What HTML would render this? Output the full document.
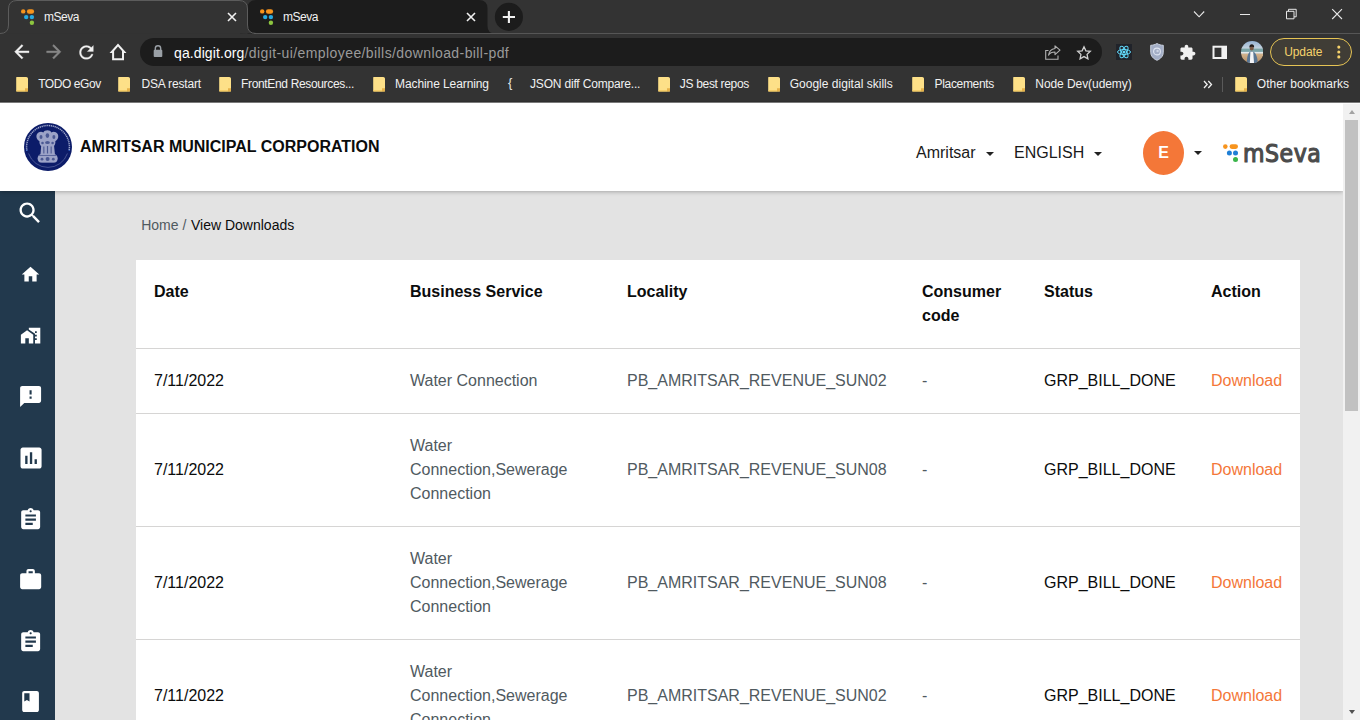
<!DOCTYPE html>
<html lang="en">
<head>
<meta charset="utf-8">
<title>mSeva</title>
<style>
*{box-sizing:border-box;margin:0;padding:0}
html,body{width:1360px;height:720px;overflow:hidden;background:#e3e3e3;font-family:"Liberation Sans",Arial,sans-serif}
.abs{position:absolute}
/* ---------- browser chrome ---------- */
#chrome{position:absolute;left:0;top:0;width:1360px;height:103px;background:#333333;border-bottom:1px solid #7a7a7a;box-shadow:inset 0 -1px 0 #2e2e2e;z-index:10;color:#fff;font-family:"Liberation Sans",sans-serif;font-size:12px}
#chrome svg{position:absolute;display:block}
.tabtxt{position:absolute;top:10px;font-size:12px;line-height:14px;color:#f1f1f1;white-space:nowrap;letter-spacing:-0.45px}
#tabline{position:absolute;left:490px;top:33px;width:870px;height:1px;background:#565656}
#omni{position:absolute;left:140px;top:38px;width:962px;height:28px;border-radius:14px;background:#1c1c1c}
#url{position:absolute;left:174px;top:45px;font-size:14px;line-height:16px;white-space:nowrap;color:#9a9a9a;letter-spacing:0.41px}
#url b{font-weight:normal;color:#fff;letter-spacing:0.1px}
.bm{position:absolute;top:77px;font-size:12px;line-height:14px;color:#f1f1f1;white-space:nowrap}
.fold{position:absolute;top:77px;width:12px;height:14px}
#update{position:absolute;left:1270px;top:38px;width:82.3px;height:28px;border:1px solid #e6c454;border-radius:14px;color:#f5d26b;font-size:12px;line-height:26px;padding-left:13.2px;background:#403d36;letter-spacing:-0.1px}
/* ---------- app ---------- */
#hdr{position:absolute;left:0;top:102px;width:1343px;height:89px;background:#fff;box-shadow:0 1px 4px rgba(0,0,0,.27);z-index:3}
#ulb{position:absolute;left:80px;top:36px;font-size:16px;font-weight:bold;line-height:18px;color:#0b0c0c;white-space:nowrap}
.hsel{position:absolute;top:42px;font-size:16px;line-height:18px;color:#1a1a1a;white-space:nowrap}
.caret{position:absolute;width:0;height:0;border-left:4px solid transparent;border-right:4px solid transparent;border-top:4px solid #222}
#avatar{position:absolute;left:1143px;top:29px;width:41px;height:44px;border-radius:50%;background:#f47738;color:#fff;font-weight:bold;font-size:16px;line-height:44px;text-align:center}
#emb{position:absolute;left:24px;top:21px}
#mdots{position:absolute;left:1223px;top:42px}
#mtxt{position:absolute;left:1243px;top:37.7px;font-family:"DejaVu Sans Condensed","DejaVu Sans","Liberation Sans",sans-serif;font-weight:normal;font-size:24.5px;line-height:28px;color:#4b4b4b;-webkit-text-stroke:1.1px #4b4b4b;letter-spacing:0.55px;white-space:nowrap}
#side{position:absolute;left:0;top:190px;width:55px;height:530px;background:#22394d;z-index:2}
#side svg{position:absolute;fill:#fff;overflow:visible}
#crumb{position:absolute;left:141.2px;top:216px;font-size:14px;line-height:18px;color:#505a5f;white-space:nowrap}
#crumb span{color:#0b0c0c;position:absolute;left:49.8px;top:0}
#card{position:absolute;left:136px;top:260px;width:1164px;height:470px;background:#fff}
.row{position:absolute;left:0;width:1164px;border-top:1px solid #d6d5d4}
.c{position:absolute;font-size:16px;line-height:24px;white-space:nowrap;color:#0b0c0c}
.h{font-weight:bold}
.g{color:#505a5f}
.o{color:#f47738}
#tbl{border-collapse:collapse;table-layout:fixed;width:1164px;font-size:16px;line-height:24px;color:#0b0c0c}
#tbl th,#tbl td{padding:20px 18px;text-align:left;vertical-align:middle;white-space:nowrap}
#tbl th{font-weight:bold;vertical-align:top;height:88px}
#tbl td{border-top:1px solid #d6d5d4}
#tbl .g{color:#505a5f}
#tbl .o{color:#f47738}
/* scrollbar */
#sb{position:absolute;left:1343px;top:103px;width:17px;height:617px;background:#f1f1f1;z-index:5;border-top:1px solid #fbfbfb}
#sbthumb{position:absolute;left:2px;top:16px;width:13px;height:291px;background:#c1c1c1}
</style>
</head>
<body>
<div id="chrome">
  <div id="tabline"></div>
  <svg style="left:0;top:0" width="500" height="35" viewBox="0 0 500 35">
    <path d="M247.5 34 V8.500 Q247.500 0 256 0 H479 Q487.500 0 487.500 8.500 V26 Q487.500 33.500 495 33.500 H500 V35 H240 V33.500 Z" fill="#1c1c1c" transform="translate(0,0)"/>
    <path d="M254 33.500 H500" stroke="#565656" stroke-width="1" fill="none"/>
    <path d="M0 33.500 Q8.500 33.500 8.500 25 V9 Q8.500 .5 17 .5 H239 Q247.500 .5 247.500 9 V25 Q247.500 33.500 256 33.500" fill="#333333" stroke="#5c5c5c" stroke-width="1"/>
    <rect x="0" y="34" width="500" height="1" fill="#333333"/>
  </svg>
  <svg style="left:21px;top:9.1px" width="14" height="17" viewBox="0 0 14 17">
<circle cx="2.200" cy="2.400" r="2.200" fill="#f7941d"/><rect x="5.900" y=".2" width="7.200" height="4.500" rx="2.250" fill="#f7941d"/>
<circle cx="5.200" cy="8.100" r="2.200" fill="#27aae1"/><circle cx="10.900" cy="8.100" r="2.200" fill="#27aae1"/><circle cx="10.900" cy="13.800" r="2.200" fill="#8dc63f"/></svg>
  <div class="tabtxt" style="left:44px">mSeva</div>
  <svg style="left:226.5px;top:12px" width="10" height="10" viewBox="-5 -5 10 10"><path d="M-4 -4L4 4M4 -4L-4 4" stroke="#f1f1f1" stroke-width="1.6" fill="none"/></svg>
  <svg style="left:260px;top:9.1px" width="14" height="17" viewBox="0 0 14 17">
<circle cx="2.200" cy="2.400" r="2.200" fill="#f7941d"/><rect x="5.900" y=".2" width="7.200" height="4.500" rx="2.250" fill="#f7941d"/>
<circle cx="5.200" cy="8.100" r="2.200" fill="#27aae1"/><circle cx="10.900" cy="8.100" r="2.200" fill="#27aae1"/><circle cx="10.900" cy="13.800" r="2.200" fill="#8dc63f"/></svg>
  <div class="tabtxt" style="left:283px">mSeva</div>
  <svg style="left:466px;top:12px" width="10" height="10" viewBox="-5 -5 10 10"><path d="M-4 -4L4 4M4 -4L-4 4" stroke="#f1f1f1" stroke-width="1.6" fill="none"/></svg>
  <svg style="left:494px;top:2px" width="30" height="30" viewBox="0 0 30 30"><circle cx="14.900" cy="14.900" r="14.050" fill="#1c1c1c"/><path d="M8.800 15H21M14.900 8.900V21.100" stroke="#f1f1f1" stroke-width="2.100" fill="none"/></svg>
  <!-- window controls -->
  <svg style="left:1190px;top:6px" width="160" height="18" viewBox="1190 6 160 18" fill="none" stroke="#e8e8e8" stroke-width="1.100">
    <path d="M1194 11.500l5.100 5.300 5.100-5.300"/>
    <path d="M1240 14.500h10" stroke-width="1"/>
    <path d="M1286.500 11.300h7.500v7.500h-7.500zM1288.500 11.300v-2h7.700v7.500h-2.200" stroke-width="1"/>
    <path d="M1332.200 9.200l9.800 9.800M1342 9.200l-9.800 9.800" stroke-width="1.100"/>
  </svg>
  <!-- toolbar -->
  <svg style="left:11px;top:41.200px" width="21.600" height="21.600" viewBox="0 0 24 24" fill="#f1f1f1" stroke="#f1f1f1" stroke-width=".4"><path d="M20 11H7.830l5.590-5.590L12 4l-8 8 8 8 1.410-1.410L7.830 13H20v-2z"/></svg>
  <svg style="left:43.200px;top:41.200px" width="21.600" height="21.600" viewBox="0 0 24 24" fill="#878787" stroke="#878787" stroke-width=".4"><path d="M12 4l-1.410 1.410L16.170 11H4v2h12.170l-5.580 5.590L12 20l8-8z"/></svg>
  <svg style="left:75.600px;top:41.700px" width="20.800" height="20.800" viewBox="0 0 24 24" fill="#f1f1f1" stroke="#f1f1f1" stroke-width=".3"><path d="M17.650 6.350C16.200 4.900 14.210 4 12 4c-4.420 0-7.990 3.580-7.990 8s3.570 8 7.990 8c3.730 0 6.840-2.550 7.730-6h-2.080c-.82 2.330-3.040 4-5.650 4-3.310 0-6-2.690-6-6s2.690-6 6-6c1.660 0 3.140.69 4.220 1.780L13 11h7V4l-2.350 2.350z"/></svg>
  <svg style="left:108px;top:42px" width="20" height="20" viewBox="108 42 20 20" fill="#f1f1f1"><path fill-rule="evenodd" d="M118 43.500L109.500 52.900H112.100V60.300H124V52.900H126.500ZM118 46.500L122 50.900V58.300H114.100V50.900Z"/></svg>
  <div id="omni"></div>
  <svg style="left:153px;top:45px" width="10" height="13" viewBox="0 0 10 13"><path d="M2.300 5V3.400a2.700 2.700 0 0 1 5.400 0V5" fill="none" stroke="#9aa0a6" stroke-width="1.400"/><rect x=".7" y="4.800" width="8.600" height="7.200" rx="1" fill="#9aa0a6"/></svg>
  <div id="url"><b>qa.digit.org</b>/digit-ui/employee/bills/download-bill-pdf</div>
  <!-- share -->
  <svg style="left:1044px;top:44px" width="18" height="17" viewBox="0 0 18 17" fill="none" stroke="#b0b0b0" stroke-width="1.100"><path d="M4.500 6.500H1.700V15.300H14V11.500"/><path d="M11 1.800l5 4.400-5 4.400V8c-3.400 0-5.300 1-6.500 3.200C5 7.500 7.300 5 11 4.500z" stroke-linejoin="round"/></svg>
  <!-- star -->
  <svg style="left:1075.800px;top:44.500px" width="16" height="15" viewBox="0 0 24 23" fill="none" stroke="#d0d0d0" stroke-width="2" stroke-linejoin="miter"><path d="M12 2.600l2.900 6.300 6.800.8-5 4.700 1.300 6.800L12 17.800 6 21.200l1.300-6.800-5-4.700 6.800-.8z"/></svg>
  <!-- react ext -->
  <svg style="left:1116px;top:44px" width="16" height="16" viewBox="0 0 16 16"><rect width="16" height="16" fill="#20232a"/><g fill="none" stroke="#61dafb" stroke-width="1"><ellipse cx="8" cy="8" rx="6.500" ry="2.500"/><ellipse cx="8" cy="8" rx="6.500" ry="2.500" transform="rotate(60 8 8)"/><ellipse cx="8" cy="8" rx="6.500" ry="2.500" transform="rotate(120 8 8)"/></g><circle cx="8" cy="8" r="1.500" fill="#61dafb"/></svg>
  <!-- shield -->
  <svg style="left:1149.500px;top:43px" width="14" height="18" viewBox="0 0 14 18"><path d="M7 .5C5 1.700 3 2.200 .7 2.300v7C.7 13 3.300 15.800 7 17.300c3.700-1.500 6.300-4.300 6.300-8v-7C11 2.200 9 1.700 7 .5z" fill="#a3aec6" stroke="#d3d9e6" stroke-width=".9"/><circle cx="7" cy="8.500" r="3.400" fill="none" stroke="#dfe5f2" stroke-width="1.100"/><circle cx="7.600" cy="8" r="1.200" fill="#dfe5f2" opacity=".7"/></svg>
  <!-- puzzle -->
  <svg style="left:1179px;top:43.800px" width="17.100" height="17.100" viewBox="0 0 24 24" fill="#f1f1f1"><path d="M20.500 11H19V7c0-1.100-.9-2-2-2h-4V3.500C13 2.120 11.880 1 10.500 1S8 2.120 8 3.500V5H4c-1.100 0-1.990.9-1.990 2v3.800H3.500c1.490 0 2.700 1.210 2.700 2.700s-1.210 2.700-2.700 2.700H2V20c0 1.100.9 2 2 2h3.800v-1.500c0-1.490 1.210-2.700 2.700-2.700 1.490 0 2.700 1.210 2.700 2.700V22H17c1.100 0 2-.9 2-2v-4h1.500c1.380 0 2.500-1.120 2.500-2.500S21.880 11 20.500 11z"/></svg>
  <!-- side panel -->
  <svg style="left:1212px;top:45px" width="16" height="15" viewBox="0 0 16 15"><rect x="1.500" y="1.700" width="12.500" height="11.300" fill="none" stroke="#f1f1f1" stroke-width="2"/><rect x="9.400" y="1.700" width="4.600" height="11.300" fill="#f1f1f1"/></svg>
  <!-- avatar -->
  <svg style="left:1241px;top:40.800px" width="22.400" height="22.400" viewBox="0 0 22.400 22.400"><defs><clipPath id="avc"><circle cx="11.200" cy="11.200" r="11.200"/></clipPath><linearGradient id="sky" x1="0" y1="0" x2="0" y2="1"><stop offset="0" stop-color="#94b2d4"/><stop offset="1" stop-color="#c9d6e0"/></linearGradient><linearGradient id="snd" x1="0" y1="0" x2="0" y2="1"><stop offset="0" stop-color="#d3b48e"/><stop offset="1" stop-color="#b08a62"/></linearGradient></defs><g clip-path="url(#avc)"><rect width="23" height="8" fill="url(#sky)"/><rect y="7.600" width="23" height="3.600" fill="#7ba5a8"/><rect y="10.900" width="23" height="2" fill="#e4e9ea"/><rect y="12.700" width="23" height="10" fill="url(#snd)"/><ellipse cx="10.700" cy="7" rx="2.100" ry="2.600" fill="#7a5a48"/><path d="M8.400 6.600c-.2-2.400 1-3.400 2.400-3.400s2.600 1 2.300 3.400c-.8-1.200-3.900-1.200-4.700 0z" fill="#221c1b"/><path d="M5.800 23c0-6 .9-12.700 5-12.700s6 6.700 6 12.700z" fill="#5a7693"/><path d="M8.800 23l.6-12.200h2.800l.9 12.200z" fill="#f4f5f7"/></g></svg>
  <div id="update">Update</div>
  <svg style="left:1335.700px;top:44.100px" width="6" height="16" viewBox="0 0 6 16" fill="#f5d26b"><circle cx="2.800" cy="3.100" r="1.550"/><circle cx="2.800" cy="8" r="1.550"/><circle cx="2.800" cy="12.900" r="1.550"/></svg>
  <!-- bookmarks -->
  <svg style="left:16px;top:76.500px" width="13" height="15" viewBox="0 0 13 15"><path d="M.2 .6c0-.3.2-.5.500-.5h9.600c.9 0 1.700.8 1.700 1.700V14c0 .3-.2.500-.5.500H.7c-.3 0-.5-.2-.5-.5z" fill="#fde088"/><path d="M9 11.200h3v2.800c0 .3-.2.500-.5.500H9z" fill="#e6b24a"/><path d="M.2 13.200h8.800v1.300H.7c-.3 0-.5-.2-.5-.5z" fill="#f3c95f"/></svg>
<div class="bm" style="left:38.2px;letter-spacing:-0.43px">TODO eGov</div>
<svg style="left:118.4px;top:76.500px" width="13" height="15" viewBox="0 0 13 15"><path d="M.2 .6c0-.3.2-.5.500-.5h9.600c.9 0 1.700.8 1.700 1.700V14c0 .3-.2.500-.5.500H.7c-.3 0-.5-.2-.5-.5z" fill="#fde088"/><path d="M9 11.200h3v2.800c0 .3-.2.500-.5.500H9z" fill="#e6b24a"/><path d="M.2 13.200h8.800v1.300H.7c-.3 0-.5-.2-.5-.5z" fill="#f3c95f"/></svg>
<div class="bm" style="left:141.4px;letter-spacing:-0.17px">DSA restart</div>
<svg style="left:219px;top:76.500px" width="13" height="15" viewBox="0 0 13 15"><path d="M.2 .6c0-.3.2-.5.500-.5h9.600c.9 0 1.700.8 1.700 1.700V14c0 .3-.2.500-.5.500H.7c-.3 0-.5-.2-.5-.5z" fill="#fde088"/><path d="M9 11.200h3v2.800c0 .3-.2.500-.5.500H9z" fill="#e6b24a"/><path d="M.2 13.200h8.800v1.300H.7c-.3 0-.5-.2-.5-.5z" fill="#f3c95f"/></svg>
<div class="bm" style="left:241px;letter-spacing:-0.34px">FrontEnd Resources...</div>
<svg style="left:373px;top:76.500px" width="13" height="15" viewBox="0 0 13 15"><path d="M.2 .6c0-.3.2-.5.500-.5h9.600c.9 0 1.700.8 1.700 1.700V14c0 .3-.2.500-.5.500H.7c-.3 0-.5-.2-.5-.5z" fill="#fde088"/><path d="M9 11.200h3v2.800c0 .3-.2.500-.5.500H9z" fill="#e6b24a"/><path d="M.2 13.200h8.800v1.300H.7c-.3 0-.5-.2-.5-.5z" fill="#f3c95f"/></svg>
<div class="bm" style="left:395px;letter-spacing:-0.09px">Machine Learning</div>
<div class="bm" style="left:530px;letter-spacing:-0.18px">JSON diff Compare...</div>
<svg style="left:657.8px;top:76.500px" width="13" height="15" viewBox="0 0 13 15"><path d="M.2 .6c0-.3.2-.5.500-.5h9.600c.9 0 1.700.8 1.700 1.700V14c0 .3-.2.500-.5.500H.7c-.3 0-.5-.2-.5-.5z" fill="#fde088"/><path d="M9 11.200h3v2.800c0 .3-.2.500-.5.500H9z" fill="#e6b24a"/><path d="M.2 13.200h8.800v1.300H.7c-.3 0-.5-.2-.5-.5z" fill="#f3c95f"/></svg>
<div class="bm" style="left:679.8px;letter-spacing:-0.32px">JS best repos</div>
<svg style="left:767.7px;top:76.500px" width="13" height="15" viewBox="0 0 13 15"><path d="M.2 .6c0-.3.2-.5.500-.5h9.600c.9 0 1.700.8 1.700 1.700V14c0 .3-.2.500-.5.500H.7c-.3 0-.5-.2-.5-.5z" fill="#fde088"/><path d="M9 11.200h3v2.800c0 .3-.2.500-.5.500H9z" fill="#e6b24a"/><path d="M.2 13.200h8.800v1.300H.7c-.3 0-.5-.2-.5-.5z" fill="#f3c95f"/></svg>
<div class="bm" style="left:789.7px;letter-spacing:0.02px">Google digital skills</div>
<svg style="left:911.8px;top:76.500px" width="13" height="15" viewBox="0 0 13 15"><path d="M.2 .6c0-.3.2-.5.500-.5h9.600c.9 0 1.700.8 1.700 1.700V14c0 .3-.2.500-.5.500H.7c-.3 0-.5-.2-.5-.5z" fill="#fde088"/><path d="M9 11.200h3v2.800c0 .3-.2.500-.5.500H9z" fill="#e6b24a"/><path d="M.2 13.200h8.800v1.300H.7c-.3 0-.5-.2-.5-.5z" fill="#f3c95f"/></svg>
<div class="bm" style="left:934.5px;letter-spacing:-0.32px">Placements</div>
<svg style="left:1012.6px;top:76.500px" width="13" height="15" viewBox="0 0 13 15"><path d="M.2 .6c0-.3.2-.5.500-.5h9.600c.9 0 1.700.8 1.700 1.700V14c0 .3-.2.500-.5.500H.7c-.3 0-.5-.2-.5-.5z" fill="#fde088"/><path d="M9 11.200h3v2.800c0 .3-.2.500-.5.500H9z" fill="#e6b24a"/><path d="M.2 13.200h8.800v1.300H.7c-.3 0-.5-.2-.5-.5z" fill="#f3c95f"/></svg>
<div class="bm" style="left:1035.3px;letter-spacing:-0.07px">Node Dev(udemy)</div>
<svg style="left:1234.8px;top:76.500px" width="13" height="15" viewBox="0 0 13 15"><path d="M.2 .6c0-.3.2-.5.500-.5h9.600c.9 0 1.700.8 1.700 1.700V14c0 .3-.2.500-.5.500H.7c-.3 0-.5-.2-.5-.5z" fill="#fde088"/><path d="M9 11.200h3v2.800c0 .3-.2.500-.5.500H9z" fill="#e6b24a"/><path d="M.2 13.200h8.800v1.300H.7c-.3 0-.5-.2-.5-.5z" fill="#f3c95f"/></svg>
<div class="bm" style="left:1256.8px;letter-spacing:0.01px">Other bookmarks</div>

  <div class="bm" style="left:508px;color:#e8e8e8;font-size:13px;top:76px">{</div>
  <svg style="left:1203px;top:80px" width="10" height="9" viewBox="0 0 10 9" fill="none" stroke="#f1f1f1" stroke-width="1.300"><path d="M1 1l3.200 3.500L1 8M5.300 1l3.200 3.500L5.300 8"/></svg>
  <div class="abs" style="left:1222px;top:77px;width:1px;height:15px;background:#5a5a5a"></div>
</div>

<div id="hdr">
  <svg id="emb" viewBox="0 0 48 48" width="48" height="48">
<defs><filter id="ebl" x="-10%" y="-10%" width="120%" height="120%"><feGaussianBlur stdDeviation=".35"/></filter></defs>
<circle cx="24" cy="24" r="24" fill="#0c1c69"/>
<path d="M2.900 27.500 A21.400 21.400 0 1 1 45.100 27.500" fill="none" stroke="#c9cfe8" stroke-width="1.500" stroke-dasharray="1.200 .7" opacity=".78"/>
<path d="M4.600 30.500 A20.500 20.500 0 0 0 43.400 30.500" fill="none" stroke="#9aa3cf" stroke-width=".55" opacity=".75"/>
<circle cx="2.800" cy="27.300" r=".65" fill="#3f7be0"/><circle cx="45.200" cy="27.300" r=".65" fill="#3f7be0"/>
<g filter="url(#ebl)">
<g fill="#d9ddef" opacity=".7">
<path d="M23.400 7.200c1.900 0 3.300.9 4 2.200 1.200-.9 3-1 4.400-.2 2 1.100 2.900 3.300 2.300 5.500-.4 1.500-1.500 2.700-2.800 3.500.3 1.700-.2 3.400-1.300 4.700H17c-1.200-1.300-1.800-3-1.500-4.700-1.400-.8-2.500-2-2.900-3.500-.6-2.200.3-4.400 2.300-5.500 1.400-.8 3.200-.7 4.400.2.700-1.300 2.200-2.200 4.100-2.200z"/>
<path d="M17.200 22.500h12.800l.9 8.600H16.500z"/>
<path d="M17.300 30.700c-2.400.6-3.700 2.600-3.700 4.900 0 2.600 1.800 4.500 4.400 4.500h11.300c2.600 0 4.400-1.900 4.400-4.500 0-2.300-1.300-4.300-3.700-4.900z"/>
</g>
<g fill="#0c1c69" opacity=".55">
<circle cx="23.600" cy="36" r="2"/><circle cx="18" cy="36.200" r="1.400"/><circle cx="29.300" cy="36.200" r="1.400"/>
<ellipse cx="23.400" cy="12.600" rx="1.800" ry="2.400"/><ellipse cx="17" cy="14" rx="1.500" ry="2.100"/><ellipse cx="29.900" cy="14" rx="1.500" ry="2.100"/>
<ellipse cx="23.500" cy="19.500" rx="2.400" ry="1.600"/><ellipse cx="18.500" cy="20" rx="1.300" ry="1.300"/><ellipse cx="28.600" cy="20" rx="1.300" ry="1.300"/>
<rect x="19.300" y="23.500" width="1.100" height="7"/><rect x="22.900" y="23" width="1.200" height="7.500"/><rect x="26.600" y="23.500" width="1.100" height="7"/>
<rect x="15" y="32" width="17.300" height=".8"/><rect x="15.500" y="39" width="16.500" height=".6"/>
</g>
</g>
</svg>
  <div id="ulb">AMRITSAR MUNICIPAL CORPORATION</div>
  <div class="hsel" style="left:916px">Amritsar</div>
  <div class="caret" style="left:986px;top:50px"></div>
  <div class="hsel" style="left:1014px">ENGLISH</div>
  <div class="caret" style="left:1094px;top:50px"></div>
  <div id="avatar">E</div>
  <div class="caret" style="left:1194px;top:49px"></div>
  <svg id="mdots" viewBox="0 0 16 19" width="16" height="19">
<circle cx="2.300" cy="2.600" r="2.300" fill="#f7941d"/>
<rect x="6.600" y=".3" width="8.400" height="4.600" rx="2.300" fill="#f7941d"/>
<circle cx="6.400" cy="9" r="2.500" fill="#1f7fd6"/>
<circle cx="12.500" cy="9" r="2.500" fill="#1f7fd6"/>
<circle cx="12.500" cy="15.600" r="2.500" fill="#39b54a"/>
</svg>
<div id="mtxt">mSeva</div>
</div>
<div id="side">
<svg viewBox="0 0 24 24" style="left:16.4px;top:9.3px;width:28px;height:28px"><path d="M15.5 14h-.79l-.28-.27C15.41 12.59 16 11.11 16 9.5 16 5.91 13.09 3 9.5 3S3 5.91 3 9.5 5.91 16 9.5 16c1.61 0 3.09-.59 4.23-1.57l.27.28v.79l5 4.99L20.49 19l-4.99-5zm-6 0C7.01 14 5 11.99 5 9.5S7.01 5 9.5 5 14 7.01 14 9.5 11.99 14 9.5 14z"/></svg>
<svg viewBox="0 0 24 24" style="left:20.05px;top:74.0px;width:21px;height:21px"><path d="M10 20v-6h4v6h5v-8h3L12 3 2 12h3v8z"/></svg>
<svg viewBox="0 0 24 24" style="left:19.9px;top:135.1px;width:21.2px;height:21.2px"><path d="M1 11v10h5v-6h4v6h5V11L8 6z M10 3v1.97l7 5V11h2v2h-2v2h2v2h-2v4h6V3H10zm9 6h-2V7h2v2z"/></svg>
<svg viewBox="0 0 24 24" style="left:17.9px;top:193.9px;width:25.2px;height:25.2px"><path d="M20 2H4c-1.1 0-1.99.9-1.99 2L2 22l4-4h14c1.1 0 2-.9 2-2V4c0-1.1-.9-2-2-2zm-7 12h-2v-2h2v2zm0-4h-2V6h2v4z"/></svg>
<svg viewBox="0 0 24 24" style="left:16.8px;top:253.9px;width:28.1px;height:28.1px"><path d="M19 3H5c-1.1 0-2 .9-2 2v14c0 1.1.9 2 2 2h14c1.1 0 2-.9 2-2V5c0-1.1-.9-2-2-2zM9 17H7v-7h2v7zm4 0h-2V7h2v10zm4 0h-2v-4h2v4z"/></svg>
<svg viewBox="0 0 24 24" style="left:17.8px;top:316.9px;width:25.3px;height:25.3px"><path d="M19 3h-4.18C14.4 1.84 13.3 1 12 1c-1.3 0-2.4.84-2.82 2H5c-1.1 0-2 .9-2 2v14c0 1.1.9 2 2 2h14c1.1 0 2-.9 2-2V5c0-1.1-.9-2-2-2zm-7 0c.55 0 1 .45 1 1s-.45 1-1 1-1-.45-1-1 .45-1 1-1zm2 14H7v-2h7v2zm3-4H7v-2h10v2zm0-4H7V7h10v2z"/></svg>
<svg viewBox="0 0 24 24" style="left:17.9px;top:377.3px;width:25.3px;height:25.3px"><path d="M20 6h-4V4c0-1.11-.89-2-2-2h-4c-1.11 0-2 .89-2 2v2H4c-1.11 0-1.99.89-1.99 2L2 19c0 1.11.89 2 2 2h16c1.11 0 2-.89 2-2V8c0-1.11-.89-2-2-2zm-6 0h-4V4h4v2z"/></svg>
<svg viewBox="0 0 24 24" style="left:17.8px;top:438.9px;width:25.3px;height:25.3px"><path d="M19 3h-4.18C14.4 1.84 13.3 1 12 1c-1.3 0-2.4.84-2.82 2H5c-1.1 0-2 .9-2 2v14c0 1.1.9 2 2 2h14c1.1 0 2-.9 2-2V5c0-1.1-.9-2-2-2zm-7 0c.55 0 1 .45 1 1s-.45 1-1 1-1-.45-1-1 .45-1 1-1zm2 14H7v-2h7v2zm3-4H7v-2h10v2zm0-4H7V7h10v2z"/></svg>
<svg viewBox="0 0 24 24" style="left:18.0px;top:499.0px;width:25.1px;height:25.1px"><path d="M18 2H6c-1.1 0-2 .9-2 2v16c0 1.1.9 2 2 2h12c1.1 0 2-.9 2-2V4c0-1.1-.9-2-2-2zM6 4h5v8l-2.5-1.5L6 12V4z"/></svg>
</div>
<div id="crumb">Home / <span>View Downloads</span></div>
<div id="card">
<table id="tbl">
<colgroup><col style="width:256px"><col style="width:217px"><col style="width:295px"><col style="width:122px"><col style="width:167px"><col style="width:107px"></colgroup>
<thead><tr><th>Date</th><th>Business Service</th><th>Locality</th><th>Consumer<br>code</th><th>Status</th><th>Action</th></tr></thead>
<tbody>
<tr><td>7/11/2022</td><td class="g">Water Connection</td><td class="g">PB_AMRITSAR_REVENUE_SUN02</td><td class="g">-</td><td>GRP_BILL_DONE</td><td class="o">Download</td></tr>
<tr><td>7/11/2022</td><td class="g">Water<br>Connection,Sewerage<br>Connection</td><td class="g">PB_AMRITSAR_REVENUE_SUN08</td><td class="g">-</td><td>GRP_BILL_DONE</td><td class="o">Download</td></tr>
<tr><td>7/11/2022</td><td class="g">Water<br>Connection,Sewerage<br>Connection</td><td class="g">PB_AMRITSAR_REVENUE_SUN08</td><td class="g">-</td><td>GRP_BILL_DONE</td><td class="o">Download</td></tr>
<tr><td>7/11/2022</td><td class="g">Water<br>Connection,Sewerage<br>Connection</td><td class="g">PB_AMRITSAR_REVENUE_SUN02</td><td class="g">-</td><td>GRP_BILL_DONE</td><td class="o">Download</td></tr>
</tbody></table>
</div>
<div id="sb"><div id="sbthumb"></div><div class="abs" style="left:5.5px;top:6px;border-left:3.5px solid transparent;border-right:3.5px solid transparent;border-bottom:4px solid #a3a3a3;width:0;height:0"></div><div class="abs" style="left:5.5px;top:605.5px;border-left:3.5px solid transparent;border-right:3.5px solid transparent;border-top:4px solid #505050;width:0;height:0"></div></div>
</body>
</html>
